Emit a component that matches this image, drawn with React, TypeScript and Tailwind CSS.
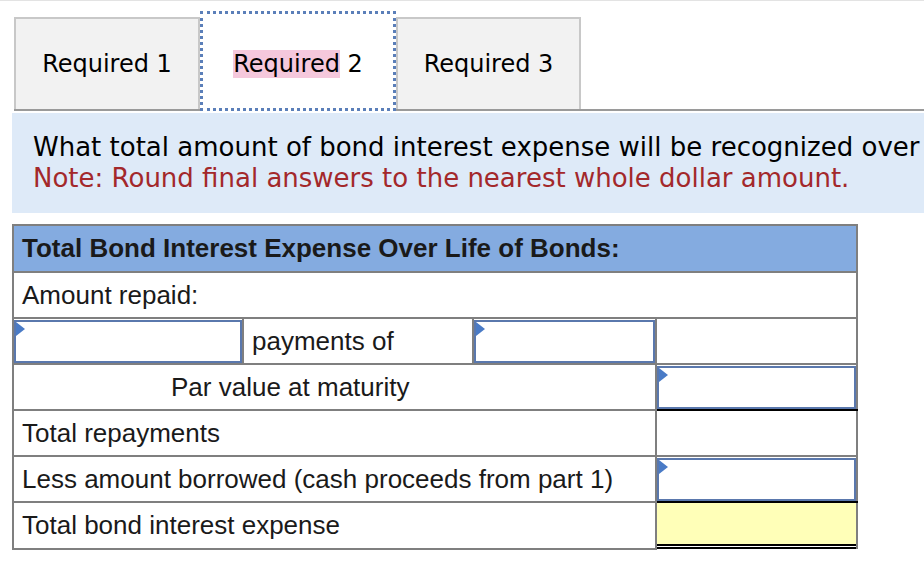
import React from "react";

const tahoma = { fontFamily: '"DejaVu Sans", Verdana, sans-serif' };

function Flag() {
  return (
    <span className="absolute left-0 top-0 h-0 w-0 border-y-[7px] border-l-[9px] border-y-transparent border-l-[#4a7bc6]" />
  );
}

function InputBox() {
  return (
    <div className="relative h-[43px] w-full border-2 border-[#5a78ad] bg-white">
      <Flag />
    </div>
  );
}

const cell = "border-2 border-[#7f7f7f]";

export default function App() {
  return (
    <div className="h-[562px] w-[924px] overflow-hidden border-t border-[#e3e3e3] bg-white">
      {/* Tabs */}
      <div style={tahoma} className="flex h-[110px] items-end pl-[14px]">
        <div className="flex h-[94px] w-full items-stretch border-b-2 border-[#9a9a9a]">
          <div className="flex w-[186px] items-center justify-center border-2 border-b-0 border-[#c8c8c8] bg-[#f2f2f2] text-[24px] text-black">
            Required 1
          </div>
          <div className="relative -mb-[2px] -mt-[6px] flex w-[196px] items-center justify-center bg-white text-[24px] text-black outline-[3px] outline-dotted outline-[#5b7fb9] -outline-offset-[3px]">
            <span className="mt-[6px]">
              <span className="bg-[#f5c8dc]">Required</span> 2
            </span>
          </div>
          <div className="flex w-[185px] items-center justify-center border-2 border-b-0 border-[#c8c8c8] bg-[#f2f2f2] text-[24px] text-black">
            Required 3
          </div>
        </div>
      </div>

      {/* Question panel */}
      <div style={tahoma} className="ml-[12px] mt-[2px] flex h-[100px] flex-col justify-center whitespace-nowrap bg-[#deeaf8] pl-[21px] text-[26px] leading-[31px]">
        <div className="text-black">What total amount of bond interest expense will be recognized over</div>
        <div className="text-[#a3282b]">Note: Round final answers to the nearest whole dollar amount.</div>
      </div>

      {/* Table */}
      <table
        className="ml-[12px] mt-[11px] w-[844px] table-fixed border-collapse text-[26px] text-[#1a1a1a]"
        style={{ fontFamily: '"Liberation Sans", Arial, sans-serif' }}
      >
        <colgroup>
          <col className="w-[230px]" />
          <col className="w-[230px]" />
          <col className="w-[183px]" />
          <col className="w-[201px]" />
        </colgroup>
        <tbody>
          <tr className="h-[47px]">
            <td colSpan={4} className={`${cell} bg-[#84abe0] px-[8px] text-[26px] font-bold`}>
              Total Bond Interest Expense Over Life of Bonds:
            </td>
          </tr>
          <tr className="h-[46px]">
            <td colSpan={4} className={`${cell} px-[8px]`}>
              Amount repaid:
            </td>
          </tr>
          <tr className="h-[46px]">
            <td className={`${cell} p-0`}>
              <InputBox />
            </td>
            <td className={`${cell} px-[8px]`}>payments of</td>
            <td className={`${cell} p-0`}>
              <InputBox />
            </td>
            <td className={`${cell} p-0`} />
          </tr>
          <tr className="h-[46px]">
            <td colSpan={3} className={`${cell} pl-[157px]`}>
              Par value at maturity
            </td>
            <td className={`${cell} border-b-black p-0`}>
              <InputBox />
            </td>
          </tr>
          <tr className="h-[46px]">
            <td colSpan={3} className={`${cell} px-[8px]`}>
              Total repayments
            </td>
            <td className={`${cell} p-0`} />
          </tr>
          <tr className="h-[46px]">
            <td colSpan={3} className={`${cell} px-[8px]`}>
              Less amount borrowed (cash proceeds from part 1)
            </td>
            <td className={`${cell} border-b-black p-0`}>
              <InputBox />
            </td>
          </tr>
          <tr className="h-[46px]">
            <td colSpan={3} className={`${cell} px-[8px]`}>
              Total bond interest expense
            </td>
            <td className={`${cell} border-b-0 p-0`}>
              <div className="flex h-[46px] flex-col">
                <div className="flex-1 bg-[#ffffb8]" />
                <div className="h-[2px] bg-black" />
                <div className="h-[1px] bg-white" />
                <div className="h-[2px] bg-black" />
              </div>
            </td>
          </tr>
        </tbody>
      </table>
    </div>
  );
}
